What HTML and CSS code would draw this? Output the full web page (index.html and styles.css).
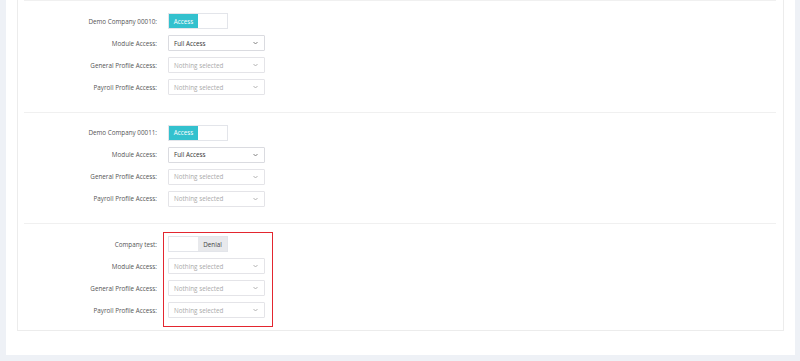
FILE: index.html
```html
<!DOCTYPE html>
<html lang="en">
  <head>
    <meta charset="UTF-8" />
    <meta name="viewport" content="width=device-width, initial-scale=1.0" />
    <title>Company Access</title>
    <link rel="stylesheet" href="styles.css">
  </head>
  <body>
    <div class="card">
      <div class="box">
        <!-- company 00010 -->
        <div class="company">
          <div class="row">
            <span class="label">Demo Company 00010:</span>
            <div class="toggle">
              <span class="toggle-on">Access</span>
              <span class="toggle-off"></span>
            </div>
          </div>
          <div class="row">
            <span class="label">Module Access:</span>
            <div class="select filled">
              <span>Full Access</span>
              <svg class="caret" width="5" height="4" viewBox="0 0 5 4"><path d="M0.5 1 L2.5 3 L4.5 1" fill="none" stroke="#777" stroke-width="0.9"/></svg>
            </div>
          </div>
          <div class="row">
            <span class="label">General Profile Access:</span>
            <div class="select">
              <span>Nothing selected</span>
              <svg class="caret" width="5" height="4" viewBox="0 0 5 4"><path d="M0.5 1 L2.5 3 L4.5 1" fill="none" stroke="#aaa" stroke-width="0.9"/></svg>
            </div>
          </div>
          <div class="row">
            <span class="label">Payroll Profile Access:</span>
            <div class="select">
              <span>Nothing selected</span>
              <svg class="caret" width="5" height="4" viewBox="0 0 5 4"><path d="M0.5 1 L2.5 3 L4.5 1" fill="none" stroke="#aaa" stroke-width="0.9"/></svg>
            </div>
          </div>
        </div>

        <!-- company 00011 -->
        <div class="company">
          <div class="row">
            <span class="label">Demo Company 00011:</span>
            <div class="toggle">
              <span class="toggle-on">Access</span>
              <span class="toggle-off"></span>
            </div>
          </div>
          <div class="row">
            <span class="label">Module Access:</span>
            <div class="select filled">
              <span>Full Access</span>
              <svg class="caret" width="5" height="4" viewBox="0 0 5 4"><path d="M0.5 1 L2.5 3 L4.5 1" fill="none" stroke="#777" stroke-width="0.9"/></svg>
            </div>
          </div>
          <div class="row">
            <span class="label">General Profile Access:</span>
            <div class="select">
              <span>Nothing selected</span>
              <svg class="caret" width="5" height="4" viewBox="0 0 5 4"><path d="M0.5 1 L2.5 3 L4.5 1" fill="none" stroke="#aaa" stroke-width="0.9"/></svg>
            </div>
          </div>
          <div class="row">
            <span class="label">Payroll Profile Access:</span>
            <div class="select">
              <span>Nothing selected</span>
              <svg class="caret" width="5" height="4" viewBox="0 0 5 4"><path d="M0.5 1 L2.5 3 L4.5 1" fill="none" stroke="#aaa" stroke-width="0.9"/></svg>
            </div>
          </div>
        </div>

        <!-- company test (denied) -->
        <div class="company last">
          <div class="row">
            <span class="label">Company test:</span>
            <div class="toggle">
              <span class="toggle-off"></span>
              <span class="toggle-deny">Denial</span>
            </div>
          </div>
          <div class="row">
            <span class="label">Module Access:</span>
            <div class="select">
              <span>Nothing selected</span>
              <svg class="caret" width="5" height="4" viewBox="0 0 5 4"><path d="M0.5 1 L2.5 3 L4.5 1" fill="none" stroke="#aaa" stroke-width="0.9"/></svg>
            </div>
          </div>
          <div class="row">
            <span class="label">General Profile Access:</span>
            <div class="select">
              <span>Nothing selected</span>
              <svg class="caret" width="5" height="4" viewBox="0 0 5 4"><path d="M0.5 1 L2.5 3 L4.5 1" fill="none" stroke="#aaa" stroke-width="0.9"/></svg>
            </div>
          </div>
          <div class="row">
            <span class="label">Payroll Profile Access:</span>
            <div class="select">
              <span>Nothing selected</span>
              <svg class="caret" width="5" height="4" viewBox="0 0 5 4"><path d="M0.5 1 L2.5 3 L4.5 1" fill="none" stroke="#aaa" stroke-width="0.9"/></svg>
            </div>
          </div>
          <!-- khung đánh dấu -->
          <div class="highlight"></div>
        </div>
      </div>
    </div>
  </body>
</html>
```

FILE: styles.css
```css
* {
  margin: 0;
  padding: 0;
  box-sizing: border-box;
}
body {
  background: #eef1f6;
  font-family: "Open Sans", "Liberation Sans", sans-serif;
  font-size: 6.3px;
  color: #555;
  padding: 0 5px 6px 6px;
}
.card {
  background: #fff;
  padding: 0 11px 24px 11px;
}
.box {
  border: 1px solid #ececec;
  border-top: 0;
  padding: 0 7px 0 6px;
}
.company {
  position: relative;
  border-top: 1px solid #f0f0f0;
  padding: 12px 0 16.5px;
  display: flex;
  flex-direction: column;
  gap: 6px;
}
.company.last {
  padding-bottom: 12px;
}
.row {
  display: grid;
  grid-template-columns: 133px 97px;
  column-gap: 11px;
  align-items: center;
  height: 16px;
}
.label {
  text-align: right;
  color: #555;
}
.toggle {
  width: 60px;
  height: 16px;
  display: flex;
  border: 1px solid #e3e5ea;
}
.toggle span {
  flex: 1;
  display: flex;
  align-items: center;
  justify-content: center;
}
.toggle-on {
  background: #33c1ce;
  color: #fff;
}
.toggle-off {
  background: #fff;
}
.toggle-deny {
  background: #e8e9ec;
  color: #444;
}
.select {
  height: 16px;
  border: 1px solid #e4e4e8;
  border-radius: 1px;
  display: flex;
  align-items: center;
  justify-content: space-between;
  padding: 0 6px 0 5px;
  color: #aaa;
}
.select.filled {
  border-color: #dadbe0;
  color: #333;
}
.caret {
  display: block;
}
.highlight {
  position: absolute;
  top: 8px;
  left: 139px;
  width: 110px;
  height: 95px;
  border: 1.5px solid #e3262f;
}
```
